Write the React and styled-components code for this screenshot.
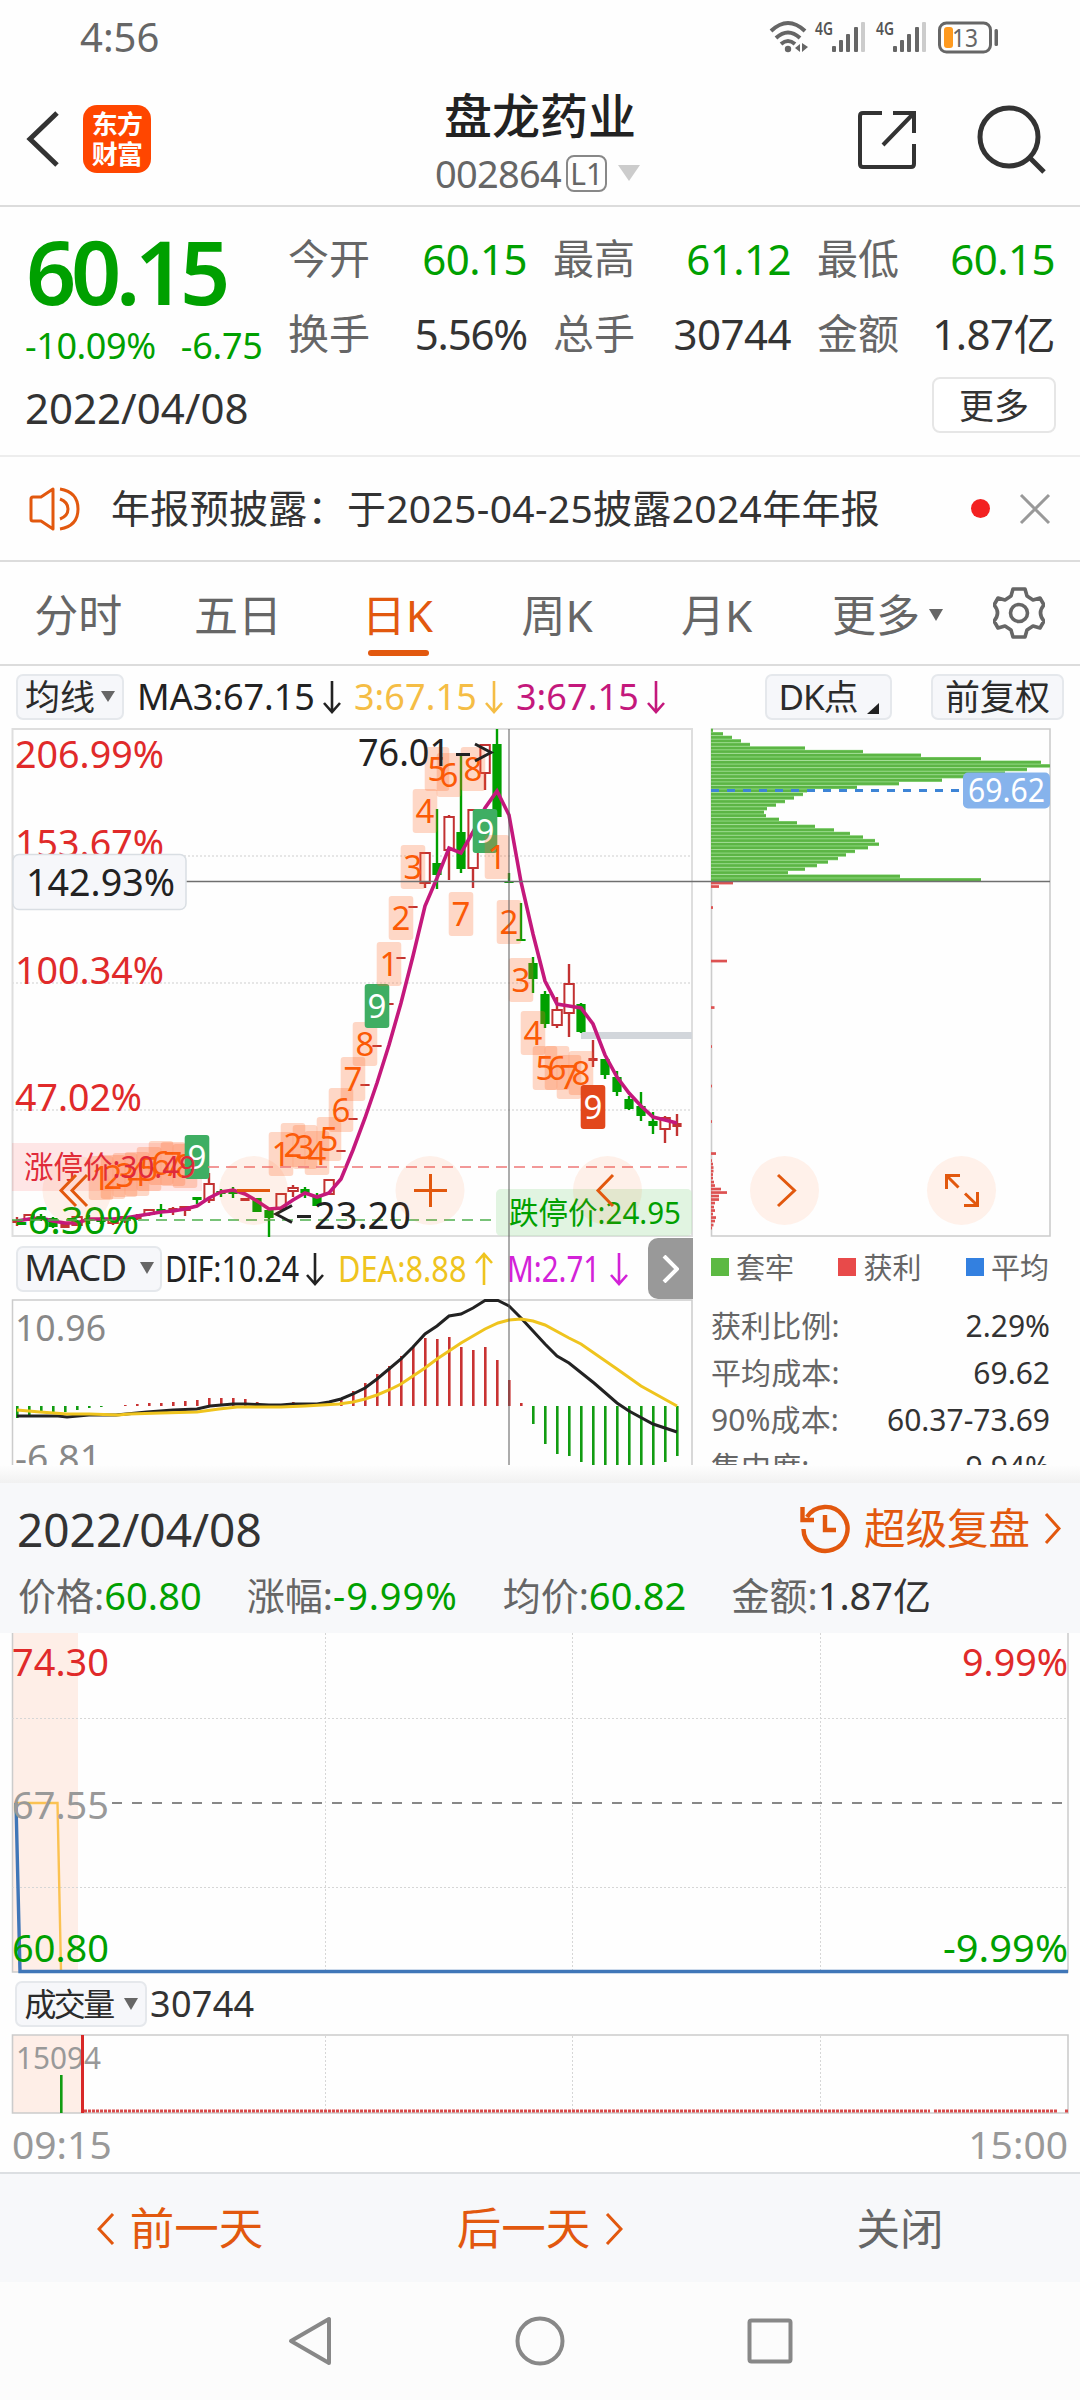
import React from 'react';
import styled, { createGlobalStyle } from 'styled-components';

const GlobalStyle = createGlobalStyle`
  * {
    box-sizing: border-box;
  }

  body {
    margin: 0;
    background: #fefefe;
    font-family: 'Noto Sans', 'Noto Sans CJK SC', sans-serif;
    color: #2b2b2b;
  }

  svg {
    display: block;
    flex: none;
  }
`;

const GREEN = '#00a000';
const RED = '#e02a2a';
const ORANGE = '#e2580e';
const MAGENTA = '#c4187c';

const Page = styled.div`
  width: 1080px;
  height: 2400px;
  overflow: hidden;
  display: flex;
  flex-direction: column;
`;

const Text = styled.span`
  font-size: ${(p) => p.$size || 38}px;
  line-height: 1;
  white-space: nowrap;
  color: ${(p) => p.$color || 'inherit'};
  font-weight: ${(p) => p.$weight || 400};
  letter-spacing: ${(p) => p.$track || 0}px;
`;

/* text squeezed horizontally into a fixed width */
const Narrow = styled(Text)`
  width: ${(p) => p.$w}px;
  transform: scaleX(${(p) => p.$scale});
  transform-origin: left;
`;

/* ---------- status bar ---------- */

const StatusBar = styled.div`
  height: 76px;
  flex: none;
  display: flex;
  justify-content: space-between;
  padding: 0 80px 2px 80px;
  align-items: center;
`;

/* ---------- header ---------- */

const Header = styled.header`
  height: 131px;
  flex: none;
  border-bottom: 2px solid #dcdcdc;
  display: grid;
  grid-template-columns: 360px 1fr 360px;
`;

const HeaderLeft = styled.div`
  display: flex;
  align-items: center;
  padding: 0 0 3px 26px;
  gap: 23px;
`;

const Logo = styled.div`
  width: 68px;
  height: 68px;
  border-radius: 14px;
  background: #ff4600;
  color: #fff;
  font-size: 26px;
  line-height: 30px;
  font-weight: 700;
  letter-spacing: -0.8px;
  text-align: center;
  padding-top: 4px;
`;

const HeaderCenter = styled.div`
  display: flex;
  flex-direction: column;
  align-items: center;
  padding-top: 16px;
`;

const CodeRow = styled.div`
  display: flex;
  align-items: center;
  margin-top: 14px;
  height: 38px;
  padding-right: 5px;
`;

const LevelTag = styled.span`
  width: 41px;
  height: 37px;
  margin: 0 11px 0 5px;
  border: 2px solid #888;
  border-radius: 8px;
  color: #666;
  font-size: 30px;
  line-height: 33px;
  text-align: center;
`;

const HeaderRight = styled.div`
  display: flex;
  align-items: center;
  justify-content: flex-end;
  padding: 0 33px 2px 0;
  gap: 60px;
`;

/* ---------- quote ---------- */

const Quote = styled.section`
  height: 250px;
  flex: none;
  border-bottom: 2px solid #ededed;
  display: grid;
  grid-template-columns: 288px 1fr;
  grid-template-rows: 160px 1fr;
`;

const PriceCell = styled.div`
  padding: 20px 0 0 26px;
  display: flex;
  flex-direction: column;
`;

const ChangeRow = styled.div`
  display: flex;
  gap: 25px;
  margin-top: 13px;
  margin-left: -1px;
`;

const Stats = styled.div`
  padding: 14px 25px 0 0;
  display: grid;
  grid-template-columns: 239px repeat(2, 238px);
  grid-auto-rows: 75px;
  column-gap: 26px;
`;

const Stat = styled.div`
  display: flex;
  justify-content: space-between;
  align-items: center;
`;

const QuoteFoot = styled.div`
  grid-column: 1 / 3;
  display: flex;
  justify-content: space-between;
  align-items: center;
  padding: 0 24px 7px 25px;
`;

const MoreButton = styled.button`
  width: 124px;
  height: 56px;
  padding: 0 0 3px;
  margin-bottom: 5px;
  border: 2px solid #e6e6e6;
  border-radius: 8px;
  background: #fff;
  font: 400 35px/50px 'Noto Sans CJK SC', sans-serif;
  color: #333;
`;

/* ---------- notice ---------- */

const Notice = styled.section`
  height: 105px;
  flex: none;
  border-bottom: 2px solid #dcdcdc;
  display: flex;
  align-items: center;
  padding: 0 29px;
`;

const NoticeText = styled(Text)`
  flex: 1;
  margin-left: 30px;
  padding-bottom: 2px;
`;

const Dot = styled.i`
  width: 19px;
  height: 19px;
  border-radius: 50%;
  background: #f32121;
  margin-right: 29px;
`;

/* ---------- tabs ---------- */

const Tabs = styled.nav`
  height: 104px;
  flex: none;
  border-bottom: 2px solid #dcdcdc;
  display: flex;
  align-items: center;
  padding: 0 35px 0 0;
`;

const Tab = styled.div`
  position: relative;
  width: 159.6px;
  flex: none;
  height: 102px;
  display: flex;
  align-items: center;
  justify-content: center;
  padding: 4px 3px 0 0;
  font-size: 44px;
  line-height: 44px;
  color: ${(p) => (p.$active ? ORANGE : '#666')};

  &::after {
    content: '';
    position: absolute;
    bottom: 8px;
    left: 50%;
    width: 61px;
    height: 6px;
    margin-left: -31px;
    border-radius: 4px;
    background: ${(p) => (p.$active ? ORANGE : 'transparent')};
  }
`;

const MoreTab = styled.div`
  display: flex;
  align-items: center;
  gap: 9px;
  margin-left: 34px;
  flex: 1;
  padding-top: 4px;
`;

const Caret = styled.i`
  border: ${(p) => (p.$w || 14) / 2}px solid transparent;
  border-top: ${(p) => p.$h || 12}px solid ${(p) => p.$color || '#666'};
  border-bottom: 0;
`;

/* ---------- indicator rows ---------- */

const Toolbar = styled.div`
  height: 61px;
  flex: none;
  display: flex;
  align-items: center;
  padding: 1px 16px 0 16px;
`;

const Chip = styled.div`
  width: ${(p) => p.$w}px;
  height: 46px;
  flex: none;
  display: flex;
  align-items: center;
  justify-content: center;
  gap: ${(p) => p.$gap || 0}px;
  margin-right: ${(p) => p.$mr || 0}px;
  padding-bottom: 1px;
  background: #f6f7fa;
  border: 2px solid #e5e8ec;
  border-radius: 7px;
`;

const Corner = styled.i`
  align-self: flex-end;
  border-left: 12px solid transparent;
  border-bottom: 11px solid #222;
  margin-bottom: 3px;
`;

const Reading = styled.div`
  display: flex;
  flex: none;
  align-items: center;
  gap: ${(p) => p.$gap || 6}px;
  color: ${(p) => p.$color};
  margin-right: ${(p) => p.$mr || 0}px;
`;

const Spacer = styled.div`
  flex: 1;
`;

/* ---------- charts ---------- */

const Charts = styled.section`
  position: relative;
  height: 738px;
  flex: none;
  overflow: hidden;
  display: grid;
  grid-template-columns: 693px 387px;
`;

const Column = styled.div`
  display: flex;
  flex-direction: column;
`;

const CrossLine = styled.i`
  position: absolute;
  left: 508px;
  top: 2px;
  bottom: 0;
  width: 2px;
  background: rgba(90, 90, 90, 0.5);
`;

const MacdBar = styled.div`
  height: 61px;
  flex: none;
  display: flex;
  align-items: center;
  padding-left: 16px;
`;

const NextButton = styled.div`
  margin-left: auto;
  flex: none;
  width: 45px;
  height: 61px;
  background: #999;
  border-radius: 10px 0 0 10px;
  display: flex;
  align-items: center;
  justify-content: center;
`;

const Legend = styled.div`
  height: 64px;
  flex: none;
  display: flex;
  justify-content: space-between;
  align-items: center;
  padding: 0 31px 6px 18px;
`;

const LegendItem = styled.div`
  display: flex;
  align-items: center;
  gap: 7px;

  &::before {
    content: '';
    width: 18px;
    height: 18px;
    background: ${(p) => p.$color};
  }
`;

const CostRow = styled.div`
  height: 47px;
  flex: none;
  display: flex;
  justify-content: space-between;
  align-items: center;
  padding: 1px 30px 0 18px;
`;

/* ---------- intraday ---------- */

const Shadow = styled.div`
  height: 18px;
  flex: none;
  background: linear-gradient(#fefefe, #f1f1f1);
`;

const DayPanel = styled.section`
  height: 150px;
  flex: none;
  background: #f7f8fa;
`;

const DayTitle = styled.div`
  height: 92px;
  display: flex;
  align-items: center;
  padding: 0 19px 0 17px;
`;

const Replay = styled.div`
  display: flex;
  align-items: center;
  gap: 14px;
  padding-bottom: 1px;
`;

const DayStats = styled.div`
  display: flex;
  gap: 45px;
  padding: 1px 0 0 18px;
`;

const VolumeBar = styled.div`
  height: 60px;
  flex: none;
  display: flex;
  align-items: center;
  padding-left: 15px;
`;

const TimeAxis = styled.div`
  height: 58px;
  flex: none;
  display: flex;
  justify-content: space-between;
  align-items: center;
  padding: 1px 12px 0 12px;
`;

const BottomBar = styled.div`
  height: 110px;
  flex: none;
  border-top: 2px solid #dcdfe2;
  background: #f7f8fa;
  display: grid;
  grid-template-columns: repeat(3, 1fr);
`;

const BottomItem = styled.div`
  display: flex;
  align-items: center;
  justify-content: center;
  gap: 15px;
  padding-top: 1px;
  color: ${(p) => p.$color};
`;

const NavBar = styled.div`
  flex: 1;
  background: #fcfcfc;
  display: flex;
  justify-content: center;
  align-items: center;
  gap: 182px;
`;

/* ---------- data ---------- */

const stats = [
  ['今开', '60.15', GREEN],
  ['最高', '61.12', GREEN],
  ['最低', '60.15', GREEN],
  ['换手', '5.56%', '#333', -1.2],
  ['总手', '30744', '#333'],
  ['金额', '1.87亿', '#333'],
];

// [high, bodyTop, bodyBottom, low, kind]; r = hollow rise, s = solid rise, g = fall
const candles = [
  [1217, 1220, 1223, 1226, 's'],
  [1214, 1214, 1221, 1221, 'r'],
  [1214, 1216, 1219, 1221, 'g'],
  [1217, 1218, 1227, 1228, 'g'],
  [1224, 1224, 1228, 1228, 's'],
  [1216, 1216, 1226, 1226, 'r'],
  [1215, 1218, 1221, 1224, 'g'],
  [1217, 1219, 1222, 1224, 'g'],
  [1218, 1218, 1224, 1225, 'r'],
  [1216, 1216, 1221, 1223, 'r'],
  [1214, 1216, 1219, 1220, 's'],
  [1209, 1209, 1215, 1216, 'r'],
  [1204, 1209, 1211, 1217, 'g'],
  [1207, 1208, 1211, 1215, 's'],
  [1206, 1206, 1211, 1216, 'r'],
  [1197, 1197, 1200, 1204, 'g'],
  [1173, 1183, 1201, 1203, 'r'],
  [1189, 1191, 1194, 1197, 'g'],
  [1187, 1190, 1194, 1198, 'g'],
  [1198, 1198, 1201, 1201, 's'],
  [1198, 1198, 1212, 1212, 'g'],
  [1210, 1210, 1218, 1237, 'g'],
  [1193, 1193, 1210, 1211, 'r'],
  [1185, 1187, 1192, 1197, 'r'],
  [1187, 1189, 1193, 1198, 'g'],
  [1193, 1197, 1206, 1206, 'g'],
  [1179, 1179, 1195, 1195, 'r'],
  [1150, 1150, 1152, 1152, 's'],
  [1118, 1118, 1120, 1120, 's'],
  [1084, 1084, 1086, 1086, 's'],
  [1045, 1045, 1047, 1047, 's'],
  [1003, 1003, 1005, 1005, 's'],
  [957, 957, 959, 959, 's'],
  [906, 906, 908, 908, 's'],
  [852, 852, 884, 888, 'r'],
  [809, 863, 875, 889, 'g'],
  [815, 816, 851, 880, 'r'],
  [755, 832, 869, 873, 'g'],
  [809, 809, 869, 888, 'r'],
  [744, 744, 774, 790, 'r'],
  [729, 744, 817, 817, 'g'],
  [873, 881, 883, 883, 'g'],
  [903, 939, 941, 941, 'g'],
  [957, 963, 979, 993, 'g'],
  [991, 994, 1024, 1028, 'g'],
  [997, 1009, 1026, 1028, 'r'],
  [964, 983, 1014, 1037, 'r'],
  [1003, 1004, 1032, 1033, 'g'],
  [1040, 1058, 1061, 1067, 's'],
  [1059, 1059, 1075, 1079, 'g'],
  [1071, 1077, 1092, 1096, 'g'],
  [1096, 1099, 1109, 1110, 'g'],
  [1092, 1106, 1116, 1121, 'g'],
  [1112, 1121, 1126, 1134, 'g'],
  [1116, 1117, 1130, 1143, 'r'],
  [1114, 1123, 1127, 1136, 's'],
];

const ma3 = [
  1221, 1219, 1218, 1221, 1223, 1223, 1219, 1219, 1219, 1218, 1216, 1214, 1212,
  1211, 1209, 1206, 1198, 1192, 1190, 1194, 1201, 1209, 1208, 1200, 1193, 1197,
  1193, 1179, 1150, 1118, 1083, 1045, 1003, 956, 906, 878, 848, 853, 832, 808,
  791, 815, 882, 934, 981, 1004, 1006, 1008, 1024, 1055, 1077, 1093, 1106, 1117,
  1120, 1123,
];

// [candle index, top, digit, fill]
const marks = [
  [7, 1156, 1], [8, 1155, 2], [9, 1153, 3], [10, 1152, 4], [11, 1147, 5],
  [12, 1141, 6], [13, 1142, 7], [14, 1144, 8], [15, 1135, 9, '#3fae63'],
  [22, 1132, 1], [23, 1123, 2], [24, 1125, 3], [25, 1131, 4], [26, 1117, 5],
  [27, 1088, 6], [28, 1057, 7], [29, 1022, 8], [30, 984, 9, '#3fae63'],
  [31, 942, 1], [32, 896, 2], [33, 845, 3], [34, 789, 4], [35, 747, 5],
  [36, 753, 6], [37, 892, 7], [38, 747, 8], [39, 809, 9, '#3fae63'],
  [40, 835, 1], [41, 900, 2], [42, 958, 3], [43, 1011, 4], [44, 1046, 5],
  [45, 1046, 6], [46, 1055, 7], [47, 1051, 8], [48, 1085, 9, '#e2471b'],
];

const greenBars = [
  2, 12, 21, 30, 39, 94, 152, 210, 270, 330, 339, 316, 294, 271, 231, 188, 146,
  96, 92, 83, 74, 65, 56, 53, 55, 68, 86, 104, 123, 139, 152, 164, 168, 157, 144,
  135, 127, 117, 106, 94, 77, 189, 270,
];

const redBars = [
  [883, 22], [886.5, 8], [907.5, 2], [961, 16], [1007.5, 3.5], [1046.5, 1],
  [1086, 1], [1121.5, 1], [1153.5, 5], [1160.5, 1], [1164, 2], [1167.5, 2.5],
  [1171, 2.5], [1174.5, 2], [1178, 2], [1182, 3], [1185.5, 4], [1189, 10],
  [1192.5, 16], [1196, 8], [1199.5, 8], [1203, 4], [1207, 3], [1210.5, 4],
  [1214, 2], [1217.5, 5], [1221, 4], [1225, 2.5], [1228, 1],
];

const macd = [
  12, 9, 7, 6, 6, 4, 2, 1, 0, -1, -2, -3, -3, -4, -5, -6, -8, -8, -8, -7, -4, -2,
  -2, -4, -2, -2, -4, -8, -15, -23, -32, -40, -50, -59, -68, -67, -69, -59, -56,
  -59, -46, -26, -3, 18, 38, 48, 50, 56, 60, 60, 60, 60, 60, 60, 56, 50,
];

const dif =
  '17,1416 58,1416 67,1417 89,1415 116,1415 147,1412 173,1410 197,1409 210,1406 233,1404 245,1404 269,1405 281,1405 293,1404 317,1404 329,1402 341,1399 353,1394 365,1388 377,1379 389,1369 401,1359 413,1347 425,1334 437,1326 449,1316 461,1314 473,1308 485,1300.5 498,1300.5 509,1306 521,1318 533,1331 545,1344 557,1356 569,1363 594,1383 617,1403 629,1411 653,1424 677,1432';
const dea =
  '17,1410 40,1412 67,1414 89,1414 118,1415 129,1414 161,1413 197,1412 219,1409 237,1407 281,1407 305,1406 339,1404 353,1402 365,1399 377,1395 389,1390 401,1384 413,1376 425,1368 437,1359 461,1343 485,1329 498,1323 509,1320 521,1319 533,1321 545,1325 569,1338 581,1344 617,1369 641,1386 677,1406';

const costs = [
  ['获利比例:', '2.29%'],
  ['平均成本:', '69.62'],
  ['90%成本:', '60.37-73.69'],
  ['集中度:', '9.94%'],
];

const candleX = (i) => 17 + i * 12;

/* ---------- pieces ---------- */

const Label = ({ x, y, w, size = 39, fill, children }) => (
  <text
    x={x}
    y={y}
    fontSize={size}
    fill={fill}
    textLength={w}
    lengthAdjust="spacingAndGlyphs"
  >
    {children}
  </text>
);

const Arrow = ({ up }) => (
  <svg width="22" height="34" viewBox="0 0 22 34" fill="none" stroke="currentColor" strokeWidth="2.6">
    <path d={up ? 'M11 33V2M3 11L11 2L19 11' : 'M11 1V32M3 23L11 32L19 23'} />
  </svg>
);

const Chevron = ({ left, w = 17, h = 32, stroke = ORANGE, sw = 3 }) => (
  <svg width={w} height={h} viewBox={`0 0 ${w} ${h}`} fill="none" stroke={stroke} strokeWidth={sw}>
    <path
      d={left ? `M${w - 2} 1L2 ${h / 2}L${w - 2} ${h - 1}` : `M2 1L${w - 2} ${h / 2}L2 ${h - 1}`}
    />
  </svg>
);

const StatusIcons = () => (
  <svg width="232" height="40" viewBox="768 16 232 40">
    <g fill="none" stroke="#666" strokeWidth="4">
      <path d="M771 30Q788 14 805 30" />
      <path d="M776 37Q788 26 800 37" />
      <path d="M781 43Q788 37 795 43" />
    </g>
    <circle cx="788" cy="48" r="3.2" fill="#666" />
    <path d="M800 43V51L795 47ZM802 42L808 46L802 51Z" fill="#666" />
    {[0, 61].map((dx) => (
      <g key={dx} transform={`translate(${dx} 0)`} fontWeight="600">
        <Label x={815} y={34} w={18} size={18} fill="#555">4G</Label>
        <g fill="#666">
          <rect x="832" y="45" width="4" height="6" rx="1" />
          <rect x="839" y="39" width="4" height="12" rx="1" />
          <rect x="846" y="33" width="4" height="18" rx="1" />
          <rect x="854" y="26" width="4" height="25" rx="1" />
        </g>
        <rect x="861" y="21" width="4" height="30" rx="1" fill="#ccc" />
      </g>
    ))}
    <rect x="939.5" y="22" width="51" height="29" rx="7" fill="none" stroke="#666" strokeWidth="3" />
    <rect x="944" y="26" width="9" height="21" rx="3" fill="#ff9a1f" />
    <rect x="994.5" y="28" width="3.5" height="17" rx="1.5" fill="#666" />
    <Label x={952} y={46} w={26} size={25} fill="#666">13</Label>
  </svg>
);

const Gear = () => (
  <svg width="52" height="52" viewBox="-26 -26 52 52" fill="none" stroke="#666" strokeWidth="3.6">
    <path
      strokeLinejoin="round"
      d="M-6 -24H6L8 -17L14 -13L21 -15L25 -8Q18 0 25 8L21 15L14 13L8 17L6 24H-6L-8 17L-14 13L-21 15L-25 8Q-18 0 -25 -8L-21 -15L-14 -13L-8 -17Z"
    />
    <circle r="8.5" />
  </svg>
);

const Candle = ({ i, data }) => {
  const [high, top, bottom, low, kind] = data;
  const x = candleX(i);
  const color = kind === 'g' ? GREEN : '#c23232';
  return (
    <g stroke={color} strokeWidth="2.4" fill={color}>
      {high < top && <line x1={x} x2={x} y1={high} y2={top} />}
      {low > bottom && <line x1={x} x2={x} y1={bottom} y2={low} />}
      {kind === 'r' ? (
        <rect x={x - 4.6} y={top + 1} width="9.4" height={Math.max(bottom - top - 2, 2)} fill="#fff" strokeWidth="2" />
      ) : (
        <rect x={x - 4.6} y={top} width="9.2" height={bottom - top} stroke="none" />
      )}
    </g>
  );
};

const KLineChart = () => (
  <svg width="693" height="511" viewBox="0 727 693 511">
    <g fill="none" stroke="#dedede" strokeWidth="2">
      <path d="M12.5 1236V729H692V1236Z" />
      <path d="M12 856H692M12 983H692M12 1110H692" strokeWidth="1.5" strokeDasharray="2 2" />
    </g>
    <Label x={15} y={768} w={149} fill={RED}>206.99%</Label>
    <Label x={15} y={857} w={149} fill={RED}>153.67%</Label>
    <Label x={15} y={984} w={149} fill={RED}>100.34%</Label>
    <Label x={15} y={1111} w={127} fill={RED}>47.02%</Label>

    <rect x="581" y="1032" width="111" height="7" fill="#d2d6db" />
    {candles.map((c, i) => (
      <Candle key={i} i={i} data={c} />
    ))}
    <polyline
      fill="none"
      stroke={MAGENTA}
      strokeWidth="3.6"
      points={ma3.map((y, i) => `${candleX(i)},${y}`).join(' ')}
    />
    <Label x={15} y={1234} w={124} fill={GREEN}>-6.30%</Label>

    <rect x="12" y="1143" width="190" height="48" fill="rgba(255, 60, 60, 0.12)" />
    {marks.map(([i, top, digit, fill]) => (
      <g key={i}>
        <rect
          x={candleX(i) - 12.3}
          y={top}
          width="24.6"
          height="44"
          rx="3"
          fill={fill || 'rgba(255, 105, 40, 0.26)'}
        />
        <text x={candleX(i)} y={top + 34} fontSize="33" textAnchor="middle" fill={fill ? '#fff' : '#fb5a06'}>
          {digit}
        </text>
      </g>
    ))}
    <path d="M208 1167H692" stroke="#e77" strokeWidth="1.6" strokeDasharray="11 7" />
    <path d="M12 1220H496" stroke="#4cae4c" strokeWidth="1.6" strokeDasharray="11 7" />
    <Label x={24} y={1178} w={172} size={31} fill="#e02a3a">涨停价:30.49</Label>
    <rect x="496" y="1189" width="196" height="47" rx="5" fill="rgba(200, 235, 200, 0.55)" />
    <Label x={509} y={1224} w={172} size={31} fill={GREEN}>跌停价:24.95</Label>

    <Label x={358} y={766} w={92} fill="#222">76.01</Label>
    <path d="M456 754.5H470M475 744L491 752.5L475 761" fill="none" stroke="#222" strokeWidth="3" />
    <path d="M292 1205.5L276 1214L292 1222.5M297 1216.5H311" fill="none" stroke="#222" strokeWidth="3" />
    <Label x={314} y={1229} w={97} fill="#222">23.20</Label>

    <path d="M186 881.5H693" stroke="#6f6f6f" strokeWidth="1.5" />
    <rect x="13" y="854.5" width="173" height="55" rx="6" fill="#f6f7fa" stroke="#d9dee3" strokeWidth="1.5" />
    <Label x={26} y={896} w={149} fill="#222">142.93%</Label>

    <g fill="rgba(255, 95, 20, 0.09)">
      {[77, 253.5, 430, 607.5].map((cx) => (
        <circle key={cx} cx={cx} cy="1190.5" r="34.5" />
      ))}
    </g>
    <path
      d="M76 1175L61 1190.5L76 1206M87 1175L72 1190.5L87 1206M237 1190.5H270M414 1190.5H447M430.5 1174V1207M613 1175L598 1190.5L613 1206"
      fill="none"
      stroke={ORANGE}
      strokeWidth="3"
    />
  </svg>
);

const MacdChart = () => (
  <svg width="693" height="166" viewBox="0 1299 693 166">
    <path d="M12.5 1470V1300H692V1470" fill="none" stroke="#ccc" strokeWidth="1.5" />
    <Label x={15} y={1341} w={91} size={37} fill="#888">10.96</Label>
    <Label x={15} y={1471} w={86} size={37} fill="#888">-6.81</Label>
    {macd.map((v, i) => (
      <rect
        key={i}
        x={candleX(i) - 1}
        y={Math.min(1406, 1406 + v)}
        width="2.6"
        height={Math.abs(v)}
        fill={v > 0 ? '#119c11' : '#c83232'}
      />
    ))}
    <polyline points={dif} fill="none" stroke="#222" strokeWidth="3" />
    <polyline points={dea} fill="none" stroke="#efc41e" strokeWidth="3" />
  </svg>
);

const ChipChart = () => (
  <svg width="387" height="511" viewBox="693 727 387 511">
    <path d="M711.5 729H1050V1236H711.5Z" fill="none" stroke="#ccc" strokeWidth="1.6" />
    {greenBars.map((w, i) => (
      <g key={i}>
        <rect x="711" y={728.5 + i * 3.56} width={w} height="3.6" fill="#8ad57a" />
        <rect x="711" y={729 + i * 3.56} width={w} height="2.5" fill="#5cb545" />
      </g>
    ))}
    {redBars.map(([y, w]) => (
      <rect key={y} x="711" y={y - 1.3} width={w} height="2.7" fill="#dd5252" />
    ))}
    <path d="M711 790.5H962" stroke="#3d84d6" strokeWidth="3" strokeDasharray="8 8" />
    <rect x="963" y="772.5" width="87" height="36" rx="5" fill="#86b3ec" />
    <Label x={968} y={802} w={77} size={32} fill="#fff">69.62</Label>
    <path d="M693 881.5H1050" stroke="#6f6f6f" strokeWidth="1.5" />
    <circle cx="784.5" cy="1190.5" r="34.5" fill="#fff1ea" />
    <circle cx="961.5" cy="1190.5" r="34.5" fill="#fff1ea" />
    <g fill="none" stroke={ORANGE} strokeWidth="3">
      <path d="M778 1175L794.5 1190.5L778 1206" />
      <path d="M946.5 1189V1175.5H960M947 1176L958.5 1187.5M977.5 1192V1205.5H964M977 1205L965 1193.5" />
    </g>
  </svg>
);

const IntradayChart = () => (
  <svg width="1080" height="341" viewBox="0 1633 1080 341">
    <rect x="13" y="1633" width="65" height="339" fill="#feeee7" />
    <path d="M12.5 1633V1972H1068V1633" fill="none" stroke="#ccc" strokeWidth="1.5" />
    <path
      d="M325.5 1633V1972M572.5 1633V1972M820.5 1633V1972M12 1718.5H1068M12 1887.5H1068"
      stroke="#d6d6d6"
      strokeDasharray="2 2"
    />
    <path d="M112 1803H1068" stroke="#888" strokeWidth="2" strokeDasharray="10 10" />
    <path d="M14 1803H57.5L61 1971" fill="none" stroke="#fbc252" strokeWidth="2.4" />
    <path d="M16 1803L20 1971.5H1068" fill="none" stroke="#3f76b8" strokeWidth="3.4" />
    <Label x={12} y={1676} w={97} fill={RED}>74.30</Label>
    <Label x={962} y={1676} w={106} fill={RED}>9.99%</Label>
    <Label x={12} y={1819} w={97} fill="#999">67.55</Label>
    <Label x={12} y={1962} w={97} fill={GREEN}>60.80</Label>
    <Label x={943} y={1962} w={125} fill={GREEN}>-9.99%</Label>
  </svg>
);

const VolumeChart = () => (
  <svg width="1080" height="80" viewBox="0 2034 1080 80">
    <rect x="13" y="2035" width="68" height="78" fill="#feeee7" />
    <path d="M12.5 2035H1068V2113H12.5Z" fill="none" stroke="#ccc" strokeWidth="1.6" />
    <path d="M325.5 2036V2112M572.5 2036V2112M820.5 2036V2112" stroke="#d6d6d6" strokeDasharray="2 2" />
    <Label x={16} y={2069} w={85} size={30} fill="#999">15094</Label>
    <rect x="60" y="2075" width="2.6" height="38" fill="#119c11" />
    <rect x="81" y="2035" width="3" height="78" fill="#d82828" />
    <path d="M84 2111H930M934 2111H1058M1065 2111H1068" stroke="#d84a4a" strokeWidth="3" strokeDasharray="3 1" />
  </svg>
);

const App = () => (
  <Page>
    <GlobalStyle />
    <StatusBar>
      <Text $size={40} $color="#666">4:56</Text>
      <StatusIcons />
    </StatusBar>

    <Header>
      <HeaderLeft>
        <svg width="34" height="56" viewBox="0 0 34 56" fill="none" stroke="#333" strokeWidth="5">
          <path d="M31 2L4 28L31 54" />
        </svg>
        <Logo>东方<br />财富</Logo>
      </HeaderLeft>
      <HeaderCenter>
        <Text $size={48} $weight={500} $color="#222">盘龙药业</Text>
        <CodeRow>
          <Text $size={38} $color="#666" $track={-0.7}>002864</Text>
          <LevelTag>L1</LevelTag>
          <Caret $w={22} $h={16} $color="#ccc" />
        </CodeRow>
      </HeaderCenter>
      <HeaderRight>
        <svg width="60" height="60" viewBox="0 0 60 60" fill="none" stroke="#333" strokeWidth="4">
          <path d="M25 3H6Q3 3 3 6V54Q3 57 6 57H54Q57 57 57 54V34M57 23V3H36M57 3L26 35" />
        </svg>
        <svg width="70" height="70" viewBox="0 0 70 70" fill="none" stroke="#333" strokeWidth="5">
          <circle cx="32" cy="32" r="29" />
          <path d="M52 52L67 67" />
        </svg>
      </HeaderRight>
    </Header>

    <Quote>
      <PriceCell>
        <Text $size={88} $weight={600} $color={GREEN} $track={-5.3}>60.15</Text>
        <ChangeRow>
          <Text $size={36} $color={GREEN} $track={-0.4}>-10.09%</Text>
          <Text $size={36} $color={GREEN} $track={-0.2}>-6.75</Text>
        </ChangeRow>
      </PriceCell>
      <Stats>
        {stats.map(([name, value, color, track]) => (
          <Stat key={name}>
            <Text $size={41} $color="#666">{name}</Text>
            <Text $size={42} $color={color} $track={track || -0.5}>{value}</Text>
          </Stat>
        ))}
      </Stats>
      <QuoteFoot>
        <Text $size={42} $color="#333">2022/04/08</Text>
        <MoreButton>更多</MoreButton>
      </QuoteFoot>
    </Quote>

    <Notice>
      <svg width="52" height="46" viewBox="0 0 52 46" fill="none" stroke={ORANGE} strokeWidth="3">
        <path d="M2 13Q2 11 4 11H12L24 3V43L12 35H4Q2 35 2 33Z" strokeLinejoin="round" />
        <path d="M31 13Q39 16 39 23Q39 30 31 33M31 3Q49 6 49 23Q49 40 31 43" />
      </svg>
      <NoticeText $size={39} $color="#333" $track={0.32}>
        年报预披露：于2025-04-25披露2024年年报
      </NoticeText>
      <Dot />
      <svg width="32" height="32" viewBox="0 0 32 32" stroke="#999" strokeWidth="3">
        <path d="M2 2L30 30M30 2L2 30" />
      </svg>
    </Notice>

    <Tabs>
      <Tab>分时</Tab>
      <Tab>五日</Tab>
      <Tab $active>日K</Tab>
      <Tab>周K</Tab>
      <Tab>月K</Tab>
      <MoreTab>
        <Text $size={44} $color="#666">更多</Text>
        <Caret $w={15} $h={12} />
      </MoreTab>
      <Gear />
    </Tabs>

    <Toolbar>
      <Chip $w={108} $gap={6} $mr={13}>
        <Text $size={35}>均线</Text>
        <Caret $w={14} $h={11} />
      </Chip>
      <Reading $color="#222" $mr={11}>
        <Text $size={36}>MA3:67.15</Text>
        <Arrow />
      </Reading>
      <Reading $color="#f5bd45" $mr={11}>
        <Text $size={36} $track={0.1}>3:67.15</Text>
        <Arrow />
      </Reading>
      <Reading $color={MAGENTA}>
        <Text $size={36} $track={0.1}>3:67.15</Text>
        <Arrow />
      </Reading>
      <Spacer />
      <Chip $w={127} $gap={9} $mr={39}>
        <Text $size={35} $track={-1}>DK点</Text>
        <Corner />
      </Chip>
      <Chip $w={133}>
        <Text $size={35}>前复权</Text>
      </Chip>
    </Toolbar>

    <Charts>
      <Column>
        <KLineChart />
        <MacdBar>
          <Chip $w={146} $gap={13} $mr={3}>
            <Text $size={36} $track={-0.4}>MACD</Text>
            <Caret $w={14} $h={12} />
          </Chip>
          <Reading $color="#222" $mr={12}>
            <Narrow $size={36} $w={133} $scale={0.845}>DIF:10.24</Narrow>
            <Arrow />
          </Reading>
          <Reading $color="#efc41e" $gap={7} $mr={12}>
            <Narrow $size={36} $w={128} $scale={0.855}>DEA:8.88</Narrow>
            <Arrow up />
          </Reading>
          <Reading $color="#d322d8" $gap={9}>
            <Narrow $size={36} $w={92} $scale={0.82}>M:2.71</Narrow>
            <Arrow />
          </Reading>
          <NextButton>
            <Chevron w={17} h={28} stroke="#fff" sw={4} />
          </NextButton>
        </MacdBar>
        <MacdChart />
      </Column>
      <Column>
        <ChipChart />
        <Legend>
          <LegendItem $color="#5cb942">
            <Text $size={29} $color="#666">套牢</Text>
          </LegendItem>
          <LegendItem $color="#e84a4a">
            <Text $size={29} $color="#666">获利</Text>
          </LegendItem>
          <LegendItem $color="#3380e0">
            <Text $size={29} $color="#666">平均</Text>
          </LegendItem>
        </Legend>
        {costs.map(([name, value]) => (
          <CostRow key={name}>
            <Text $size={30} $color="#666" $track={0.1}>{name}</Text>
            <Text $size={30} $color="#333">{value}</Text>
          </CostRow>
        ))}
      </Column>
      <CrossLine />
    </Charts>

    <Shadow />
    <DayPanel>
      <DayTitle>
        <Text $size={46} $color="#333">2022/04/08</Text>
        <Spacer />
        <Replay>
          <svg width="50" height="50" viewBox="0 0 50 50" fill="none" stroke={ORANGE} strokeWidth="4.4">
            <path d="M7 13A22 22 0 1 1 3.5 25" />
            <path d="M2.5 3V16H14" />
            <path d="M25 11V26H36" />
          </svg>
          <Text $size={41.5} $color={ORANGE}>超级复盘</Text>
          <Chevron w={17} h={31} />
        </Replay>
      </DayTitle>
      <DayStats>
        <Text $color="#666">价格:<Text $color={GREEN} $track={0.1}>60.80</Text></Text>
        <Text $color="#666">涨幅:<Text $color={GREEN} $track={0.9}>-9.99%</Text></Text>
        <Text $color="#666">均价:<Text $color={GREEN} $track={0.1}>60.82</Text></Text>
        <Text $color="#666">金额:<Text $color="#333">1.87亿</Text></Text>
      </DayStats>
    </DayPanel>

    <IntradayChart />
    <VolumeBar>
      <Chip $w={132} $gap={11} $mr={3}>
        <Text $size={32} $track={-2.6}>成交量</Text>
        <Caret $w={14} $h={12} />
      </Chip>
      <Text $size={36} $color="#333" $track={0.3}>30744</Text>
    </VolumeBar>
    <VolumeChart />
    <TimeAxis>
      <Text $size={39} $color="#999">09:15</Text>
      <Text $size={39} $color="#999">15:00</Text>
    </TimeAxis>

    <BottomBar>
      <BottomItem $color={ORANGE}>
        <Chevron left w={18} />
        <Text $size={44.5}>前一天</Text>
      </BottomItem>
      <BottomItem $color={ORANGE}>
        <Text $size={44.5}>后一天</Text>
        <Chevron w={18} />
      </BottomItem>
      <BottomItem $color="#666">
        <Text $size={43.5}>关闭</Text>
      </BottomItem>
    </BottomBar>

    <NavBar>
      <svg width="46" height="50" viewBox="0 0 46 50" fill="none" stroke="#888" strokeWidth="4">
        <path d="M42 3V47L4 25Z" strokeLinejoin="round" />
      </svg>
      <svg width="50" height="50" viewBox="0 0 50 50" fill="none" stroke="#888" strokeWidth="4">
        <circle cx="25" cy="25" r="22.5" />
      </svg>
      <svg width="46" height="46" viewBox="0 0 46 46" fill="none" stroke="#888" strokeWidth="4">
        <rect x="2.5" y="2.5" width="41" height="41" rx="2" />
      </svg>
    </NavBar>
  </Page>
);

export default App;
